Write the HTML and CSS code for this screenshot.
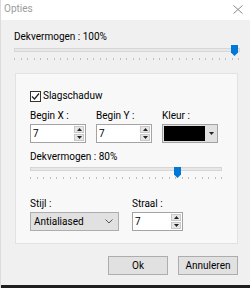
FILE: index.html
```html
<!DOCTYPE html>
<html>
<head>
<meta charset="utf-8">
<link rel="stylesheet" href="styles.css">
</head>
<body>
<div class="window">
  <div class="titlebar">
    <span class="title">Opties</span>
    <svg class="close" width="10" height="9" viewBox="0 0 10 9"><path d="M0.5 0.5 L9.5 8.5 M9.5 0.5 L0.5 8.5" stroke="#8a8a8a" stroke-width="1" fill="none"/></svg>
  </div>
  <div class="content">
    <div class="lbl first">Dekvermogen : 100%</div>
    <div class="slider slider-main">
      <div class="track"></div>
      <div class="ticks"></div>
      <svg class="thumb" style="left:217px" width="7" height="11" viewBox="0 0 7 11"><path d="M0 0 H7 V7.5 L3.5 11 L0 7.5 Z" fill="#0078d7"/></svg>
    </div>
    <div class="panel">
      <div class="check">
        <span class="box"><svg width="9" height="9" viewBox="0 0 9 9"><path d="M1 4.5 L3.5 7 L8 1.5" stroke="#222" stroke-width="1.2" fill="none"/></svg></span>
        <span>Slagschaduw</span>
      </div>
      <div class="fields">
        <div class="field">
          <div class="lbl">Begin X :</div>
          <div class="spin w56">
            <span class="val">7</span>
            <span class="arrows">
              <span class="arr"><svg width="5" height="3" viewBox="0 0 5 3"><path d="M0 3 L2.5 0 L5 3 Z" fill="#222"/></svg></span>
              <span class="arr"><svg width="5" height="3" viewBox="0 0 5 3"><path d="M0 0 L2.5 3 L5 0 Z" fill="#222"/></svg></span>
            </span>
          </div>
        </div>
        <div class="field">
          <div class="lbl">Begin Y :</div>
          <div class="spin w56">
            <span class="val">7</span>
            <span class="arrows">
              <span class="arr"><svg width="5" height="3" viewBox="0 0 5 3"><path d="M0 3 L2.5 0 L5 3 Z" fill="#222"/></svg></span>
              <span class="arr"><svg width="5" height="3" viewBox="0 0 5 3"><path d="M0 0 L2.5 3 L5 0 Z" fill="#222"/></svg></span>
            </span>
          </div>
        </div>
        <div class="field">
          <div class="lbl">Kleur :</div>
          <div class="color">
            <span class="swatch"></span>
            <span class="drop"><svg width="5" height="3" viewBox="0 0 5 3"><path d="M0 0 L2.5 3 L5 0 Z" fill="#222"/></svg></span>
          </div>
        </div>
      </div>
      <div class="lbl mid">Dekvermogen : 80%</div>
      <div class="slider slider-sub">
        <div class="track"></div>
        <div class="ticks"></div>
        <svg class="thumb" style="left:144px" width="7" height="11" viewBox="0 0 7 11"><path d="M0 0 H7 V7.5 L3.5 11 L0 7.5 Z" fill="#0078d7"/></svg>
      </div>
      <div class="fields bottom">
        <div class="field">
          <div class="lbl">Stijl :</div>
          <div class="select">
            <span>Antialiased</span>
            <svg width="8" height="5" viewBox="0 0 8 5"><path d="M0.5 0.5 L4 4 L7.5 0.5" stroke="#555" stroke-width="1" fill="none"/></svg>
          </div>
        </div>
        <div class="field">
          <div class="lbl">Straal :</div>
          <div class="spin w51">
            <span class="val">7</span>
            <span class="arrows">
              <span class="arr"><svg width="5" height="3" viewBox="0 0 5 3"><path d="M0 3 L2.5 0 L5 3 Z" fill="#222"/></svg></span>
              <span class="arr"><svg width="5" height="3" viewBox="0 0 5 3"><path d="M0 0 L2.5 3 L5 0 Z" fill="#222"/></svg></span>
            </span>
          </div>
        </div>
      </div>
    </div>
    <div class="buttons">
      <button class="btn">Ok</button>
      <button class="btn">Annuleren</button>
    </div>
  </div>
  <div class="strip"></div>
</div>
</body>
</html>
```

FILE: styles.css
```css
html, body {
  margin: 0;
  padding: 0;
}
body {
  width: 250px;
  height: 288px;
  overflow: hidden;
  background: #f0f0f0;
  font-family: Roboto, "Noto Sans", sans-serif;
  font-size: 10px;
  color: #000;
}
.window {
  width: 250px;
  height: 288px;
  display: flex;
  flex-direction: column;
  box-sizing: border-box;
  border-left: 1px solid #dcdcdc;
}
.titlebar {
  height: 20px;
  background: #fff;
  display: flex;
  align-items: center;
  justify-content: space-between;
  padding: 0 7px 0 3px;
  flex: none;
}
.title {
  color: #9c9c9c;
  font-size: 10px;
  line-height: 14px;
  margin-top: -3px;
}
.close {
  margin-top: -2px;
}
.content {
  flex: 1;
  padding: 0 10px 0 13px;
  display: flex;
  flex-direction: column;
}
.lbl {
  line-height: 14px;
  white-space: nowrap;
}
.lbl.first {
  margin-top: 10px;
}
.slider {
  position: relative;
  height: 16px;
  flex: none;
}
.slider-main {
  margin-top: 1px;
}
.track {
  margin-top: 3px;
  height: 4px;
  box-sizing: border-box;
  background: #e7e7e7;
  border: 1px solid #d6d6d6;
}
.ticks {
  margin-top: 6px;
  height: 2px;
  background: repeating-linear-gradient(to right, #bdbdbd 0 1px, transparent 1px 6.6px);
}
.thumb {
  position: absolute;
  top: 0;
  display: block;
}
.panel {
  margin: 12px 2px 0 1px;
  height: 171px;
  box-sizing: border-box;
  background: #f8f8f8;
  border: 1px solid #e2e2e2;
  padding: 16px 14px 0 14px;
}
.check {
  display: flex;
  align-items: center;
  height: 12px;
  line-height: 12px;
}
.box {
  width: 11px;
  height: 11px;
  box-sizing: border-box;
  border: 1px solid #333;
  background: #fff;
  display: flex;
  align-items: center;
  justify-content: center;
  margin-right: 2px;
}
.box svg {
  display: block;
}
.fields {
  display: flex;
  gap: 10px;
  margin-top: 7px;
}
.fields .lbl {
  margin-bottom: 1px;
}
.spin {
  height: 19px;
  box-sizing: border-box;
  border: 1px solid #a3a3a3;
  background: #fff;
  display: flex;
}
.w56 { width: 56px; }
.w51 { width: 51px; }
.val {
  flex: 1;
  padding-left: 2px;
  line-height: 17px;
}
.arrows {
  width: 10px;
  display: flex;
  flex-direction: column;
  gap: 1px;
  padding: 1px 1px 1px 0;
}
.arr {
  flex: 1;
  background: #e6e6e6;
  border: 1px solid #c8c8c8;
  display: flex;
  align-items: center;
  justify-content: center;
}
.arr svg { display: block; }
.color {
  width: 56px;
  height: 19px;
  box-sizing: border-box;
  border: 1px solid #a3a3a3;
  background: #e1e1e1;
  display: flex;
  padding: 1px;
  gap: 2px;
}
.swatch {
  flex: 1;
  background: #000;
}
.drop {
  width: 9px;
  display: flex;
  align-items: center;
  justify-content: center;
}
.lbl.mid {
  margin-top: 7px;
}
.slider-sub {
  width: 192px;
  margin-top: 0;
}
.fields.bottom {
  margin-top: 14px;
  gap: 13px;
}
.select {
  width: 89px;
  height: 19px;
  box-sizing: border-box;
  border: 1px solid #adadad;
  background: #e1e1e1;
  display: flex;
  align-items: center;
  justify-content: space-between;
  padding: 0 5px 0 3px;
  line-height: 17px;
}
.select svg { display: block; }
.buttons {
  display: flex;
  justify-content: flex-end;
  gap: 10px;
  margin-top: 12px;
  padding-right: 2px;
}
.btn {
  width: 60px;
  height: 19px;
  box-sizing: border-box;
  border: 1px solid #adadad;
  background: #e1e1e1;
  font-family: Roboto, "Noto Sans", sans-serif;
  font-size: 10px;
  color: #000;
  padding: 0;
  line-height: 17px;
}
.strip {
  height: 3px;
  background: #1e1e1e;
  flex: none;
}
```
